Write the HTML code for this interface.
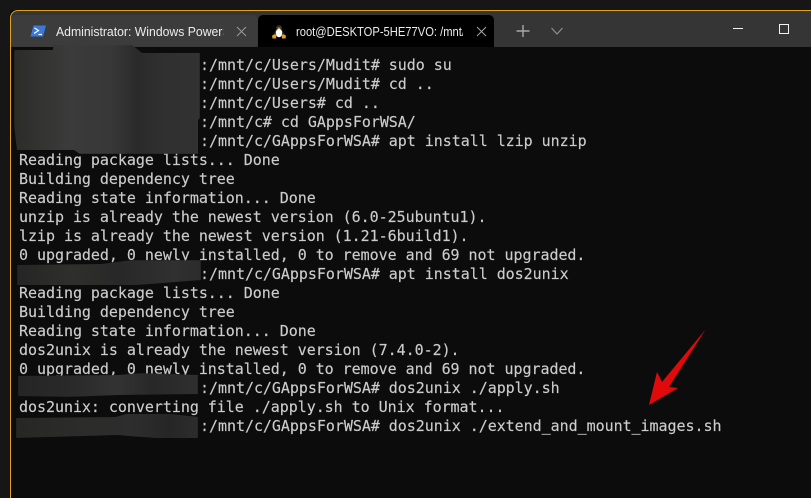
<!DOCTYPE html>
<html><head><meta charset="utf-8">
<style>
html,body{margin:0;padding:0;background:#161616;width:811px;height:498px;overflow:hidden}
#root{position:absolute;left:0;top:0;width:811px;height:498px;overflow:hidden;background:#161616}
#win{position:absolute;left:10px;top:10px;width:801px;height:488px;background:#0c0c0c}
#bar{position:absolute;left:10px;top:10px;width:801px;height:37px;background:#353535;border-top-left-radius:8px}
#border{position:absolute;left:10px;top:10px;width:801px;height:488px;box-sizing:border-box;border-left:1px solid #e2a01a;border-top:1px solid #e2a01a;border-top-left-radius:8px;pointer-events:none}
#tab2{position:absolute;left:258px;top:15px;width:236px;height:32px;background:#000;border-radius:5px 5px 0 0}
#tab1b{position:absolute;left:11px;top:15px;width:247px;height:32px;background:#3c3c3c;border-radius:5px}
.tt{position:absolute;font-family:"Liberation Sans",sans-serif;font-size:13px;color:#ececec;white-space:nowrap;overflow:hidden;height:18px;line-height:18px;transform-origin:left center}
.l{position:absolute;left:19px;font-family:"DejaVu Sans Mono",monospace;font-size:15px;line-height:19px;height:19px;color:#cccccc;white-space:pre;letter-spacing:-.04px;-webkit-text-stroke:.15px #cccccc}
.p{left:200px}
.b{position:absolute;filter:blur(.5px)}
svg{position:absolute;left:0;top:0}
</style></head><body>
<div id="root">
<div id="win"></div>
<div id="bar"></div>
<div id="tab1b"></div>
<div id="tab2"></div>
<div class="tt" style="left:56px;top:23px;width:178px;transform:scaleX(.94)">Administrator: Windows PowerShell</div>
<div class="tt" style="left:296px;top:23px;width:194px;transform:scaleX(.86)">root@DESKTOP-5HE77VO: /mnt/c/GAppsForWSA</div>

<div class="l p" style="top:56px">:/mnt/c/Users/Mudit# sudo su</div>
<div class="l p" style="top:75px">:/mnt/c/Users/Mudit# cd ..</div>
<div class="l p" style="top:94px">:/mnt/c/Users# cd ..</div>
<div class="l p" style="top:113px">:/mnt/c# cd GAppsForWSA/</div>
<div class="l p" style="top:132px">:/mnt/c/GAppsForWSA# apt install lzip unzip</div>
<div class="l" style="top:151px">Reading package lists... Done</div>
<div class="l" style="top:170px">Building dependency tree</div>
<div class="l" style="top:189px">Reading state information... Done</div>
<div class="l" style="top:208px">unzip is already the newest version (6.0-25ubuntu1).</div>
<div class="l" style="top:227px">lzip is already the newest version (1.21-6build1).</div>
<div class="l" style="top:246px">0 upgraded, 0 newly installed, 0 to remove and 69 not upgraded.</div>
<div class="l p" style="top:265px">:/mnt/c/GAppsForWSA# apt install dos2unix</div>
<div class="l" style="top:284px">Reading package lists... Done</div>
<div class="l" style="top:303px">Building dependency tree</div>
<div class="l" style="top:322px">Reading state information... Done</div>
<div class="l" style="top:341px">dos2unix is already the newest version (7.4.0-2).</div>
<div class="l" style="top:360px">0 upgraded, 0 newly installed, 0 to remove and 69 not upgraded.</div>
<div class="l p" style="top:379px">:/mnt/c/GAppsForWSA# dos2unix ./apply.sh</div>
<div class="l" style="top:398px">dos2unix: converting file ./apply.sh to Unix format...</div>
<div class="l p" style="top:417px">:/mnt/c/GAppsForWSA# dos2unix ./extend_and_mount_images.sh</div>

<div class="b" style="left:14px;top:45px;width:186px;height:109px;background:linear-gradient(90deg,#2b2b28 0,#333331 14%,#3b3b3b 30%,#383838 52%,#2a2a2a 66%,#303030 80%,#323232 100%);clip-path:polygon(0 5px,39px 5px,39px 0,118px 0,128px 8px,186px 8px,186px 73px,184px 75px,184px 109px,66px 109px,60px 105px,3px 105px,0 80px)"></div>
<div class="b" style="left:17px;top:260px;width:184px;height:26px;background:linear-gradient(90deg,#252525,#2f2f2d 30%,#282828 55%,#303030 85%,#2c2c2c);clip-path:polygon(0 5px,85px 4px,115px 0,184px 0,184px 20px,120px 25px,0 25px)"></div>
<div class="b" style="left:18px;top:373px;width:180px;height:24px;background:linear-gradient(90deg,#252525,#2a2a2a 30%,#333 55%,#282828 75%,#2f2f2f);clip-path:polygon(0 3px,100px 2px,125px 0,180px 2px,180px 21px,100px 22px,50px 24px,0 23px)"></div>
<div class="b" style="left:16px;top:413px;width:182px;height:26px;background:linear-gradient(90deg,#272725,#2c2c2a 35%,#2d2d2d 65%,#262626 85%,#2d2d2d);clip-path:polygon(0 5px,100px 4px,110px 1px,155px 1px,182px 4px,182px 25px,140px 25px,100px 22px,0 25px)"></div>

<svg width="811" height="498" viewBox="0 0 811 498">
  <!-- PowerShell icon -->
  <path d="M33.500 25.500H46L43 36.500H30.500Z" fill="#3a78dc"/>
  <path d="M34.500 28L38.500 30.500L34 33.500" fill="none" stroke="#fff" stroke-width="1.200"/>
  <path d="M38.500 34.500H42" stroke="#fff" stroke-width="1.200"/>
  <!-- Tux -->
  <path d="M279 25C276.800 25 276 26.800 276 28.500C276 30.500 274 32.500 273.500 35H284.500C284 32.500 282 30.500 282 28.500C282 26.800 281.200 25 279 25Z" fill="#2b2b2b"/>
  <ellipse cx="279" cy="33" rx="3.200" ry="4.300" fill="#fff"/>
  <path d="M277 27.600H281L279 29.500Z" fill="#e6a91d"/>
  <path d="M272 36C273.500 34 275.500 34 276.500 35.500L276 38.500H272.500Z" fill="#e0a01a"/>
  <path d="M286 36C284.500 34 282.500 34 281.500 35.500L282 38.500H285.500Z" fill="#e0a01a"/>
  <!-- close icons -->
  <path d="M237 27L246 36M246 27L237 36" stroke="#9a9a9a" stroke-width="1" fill="none"/>
  <path d="M477 27L486 36M486 27L477 36" stroke="#a5a5a5" stroke-width="1" fill="none"/>
  <!-- plus -->
  <path d="M523 25V37M516.500 31H529.500" stroke="#a8a8a8" stroke-width="1.400" fill="none"/>
  <!-- chevron -->
  <path d="M551.500 28L557 34L562.500 28" stroke="#8f8f8f" stroke-width="1.200" fill="none"/>
  <!-- minimize -->
  <path d="M733 28.500H743" stroke="#f2f2f2" stroke-width="1" fill="none"/>
  <!-- maximize -->
  <rect x="779.500" y="24.500" width="9" height="9" stroke="#f2f2f2" stroke-width="1" fill="none"/>
  <!-- red arrow -->
  <path d="M705.500 329.500L669 387L678 388L649 405L657 372L662 382Z" fill="#e10a0a"/>
</svg>
<div id="border"></div>
</div>
</body></html>
